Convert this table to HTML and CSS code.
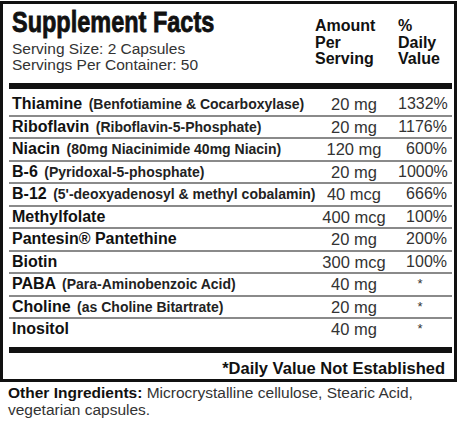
FILE: index.html
```html
<!DOCTYPE html>
<html lang="en">

<head>
    <meta charset="UTF-8">
    <meta name="viewport" content="width=device-width, initial-scale=1.0">
    <title>Supplement Facts</title>
    <link rel="stylesheet" href="styles.css">
</head>

<body>
    <div class="facts">
        <div class="facts-head">
            <div class="head-left">
                <div class="title">Supplement Facts</div>
                <div class="serving">Serving Size: 2 Capsules<br>Servings Per Container: 50</div>
            </div>
            <div class="head-amount">Amount<br>Per<br>Serving</div>
            <div class="head-dv">%<br>Daily<br>Value</div>
        </div>

        <div class="bar"></div>

        <div class="rows">
            <div class="row">
                <div class="name">Thiamine <span class="paren">(Benfotiamine &amp; Cocarboxylase)</span></div>
                <div class="amount">20 mg</div>
                <div class="dv">1332%</div>
            </div>
            <div class="row">
                <div class="name">Riboflavin <span class="paren">(Riboflavin-5-Phosphate)</span></div>
                <div class="amount">20 mg</div>
                <div class="dv">1176%</div>
            </div>
            <div class="row">
                <div class="name">Niacin <span class="paren">(80mg Niacinimide 40mg Niacin)</span></div>
                <div class="amount">120 mg</div>
                <div class="dv">600%</div>
            </div>
            <div class="row">
                <div class="name">B-6 <span class="paren">(Pyridoxal-5-phosphate)</span></div>
                <div class="amount">20 mg</div>
                <div class="dv">1000%</div>
            </div>
            <div class="row">
                <div class="name">B-12 <span class="paren">(5'-deoxyadenosyl &amp; methyl cobalamin)</span></div>
                <div class="amount">40 mcg</div>
                <div class="dv">666%</div>
            </div>
            <div class="row">
                <div class="name">Methylfolate</div>
                <div class="amount">400 mcg</div>
                <div class="dv">100%</div>
            </div>
            <div class="row">
                <div class="name">Pantesin® Pantethine</div>
                <div class="amount">20 mg</div>
                <div class="dv">200%</div>
            </div>
            <div class="row">
                <div class="name">Biotin</div>
                <div class="amount">300 mcg</div>
                <div class="dv">100%</div>
            </div>
            <div class="row">
                <div class="name">PABA <span class="paren">(Para-Aminobenzoic Acid)</span></div>
                <div class="amount">40 mg</div>
                <div class="dv star">*</div>
            </div>
            <div class="row">
                <div class="name">Choline <span class="paren">(as Choline Bitartrate)</span></div>
                <div class="amount">20 mg</div>
                <div class="dv star">*</div>
            </div>
            <div class="row">
                <div class="name">Inositol</div>
                <div class="amount">40 mg</div>
                <div class="dv star">*</div>
            </div>
        </div>

        <div class="bar"></div>

        <div class="footnote">*Daily Value Not Established</div>
    </div>

    <div class="other">
        <strong>Other Ingredients:</strong> Microcrystalline cellulose, Stearic Acid,<br>vegetarian capsules.
    </div>
</body>

</html>
```

FILE: styles.css
```css
body {
    margin: 0;
    font-family: 'Liberation Sans', Arial, sans-serif;
    color: #111;
    background: #fff;
}

.facts {
    width: 457px;
    box-sizing: border-box;
    margin-top: 1px;
    border: 3px solid #111;
    padding: 0 2px 0 6px;
}

.facts-head {
    display: grid;
    grid-template-columns: minmax(0, 1fr) 88px 54px;
    align-items: start;
    height: 79px;
}

.head-left {
    padding: 3px 0 0 3px;
}

.title {
    display: inline-block;
    font-size: 29px;
    line-height: 30px;
    font-weight: bold;
    white-space: nowrap;
    transform: scaleX(0.81);
    transform-origin: left center;
    -webkit-text-stroke: 0.8px #111;
}

.serving {
    margin-top: 4px;
    font-size: 15.5px;
    line-height: 16px;
    color: #333;
}

.head-amount,
.head-dv {
    margin-top: 14px;
    font-size: 16px;
    line-height: 16.5px;
    font-weight: bold;
}

.head-amount {
    padding-left: 5px;
}

.bar {
    height: 6px;
    background: #111;
}

.rows {
    padding: 5px 0 7px;
}

.row {
    display: grid;
    grid-template-columns: minmax(0, 1fr) 88px 54px;
    height: 20.5px;
    line-height: 20.5px;
    border-bottom: 2px solid #8a8a8a;
}

.row:last-child {
    border-bottom: none;
}

.name {
    padding-left: 3px;
    font-size: 16px;
    font-weight: bold;
    white-space: nowrap;
}

.paren {
    margin-left: 2px;
    font-size: 14px;
    color: #222;
}

.amount {
    font-size: 16.5px;
    text-align: center;
    color: #333;
}

.dv {
    font-size: 16px;
    text-align: right;
    padding-right: 5px;
    color: #333;
}

.dv.star {
    text-align: center;
    padding-right: 10px;
    font-size: 13px;
}

.footnote {
    padding: 5px 7px 1px 0;
    font-size: 16.5px;
    line-height: 20px;
    font-weight: bold;
    text-align: right;
}

.other {
    width: 450px;
    margin-top: 2px;
    padding-left: 8px;
    font-size: 15.5px;
    line-height: 17.5px;
    color: #333;
}

.other strong {
    color: #111;
}
```
